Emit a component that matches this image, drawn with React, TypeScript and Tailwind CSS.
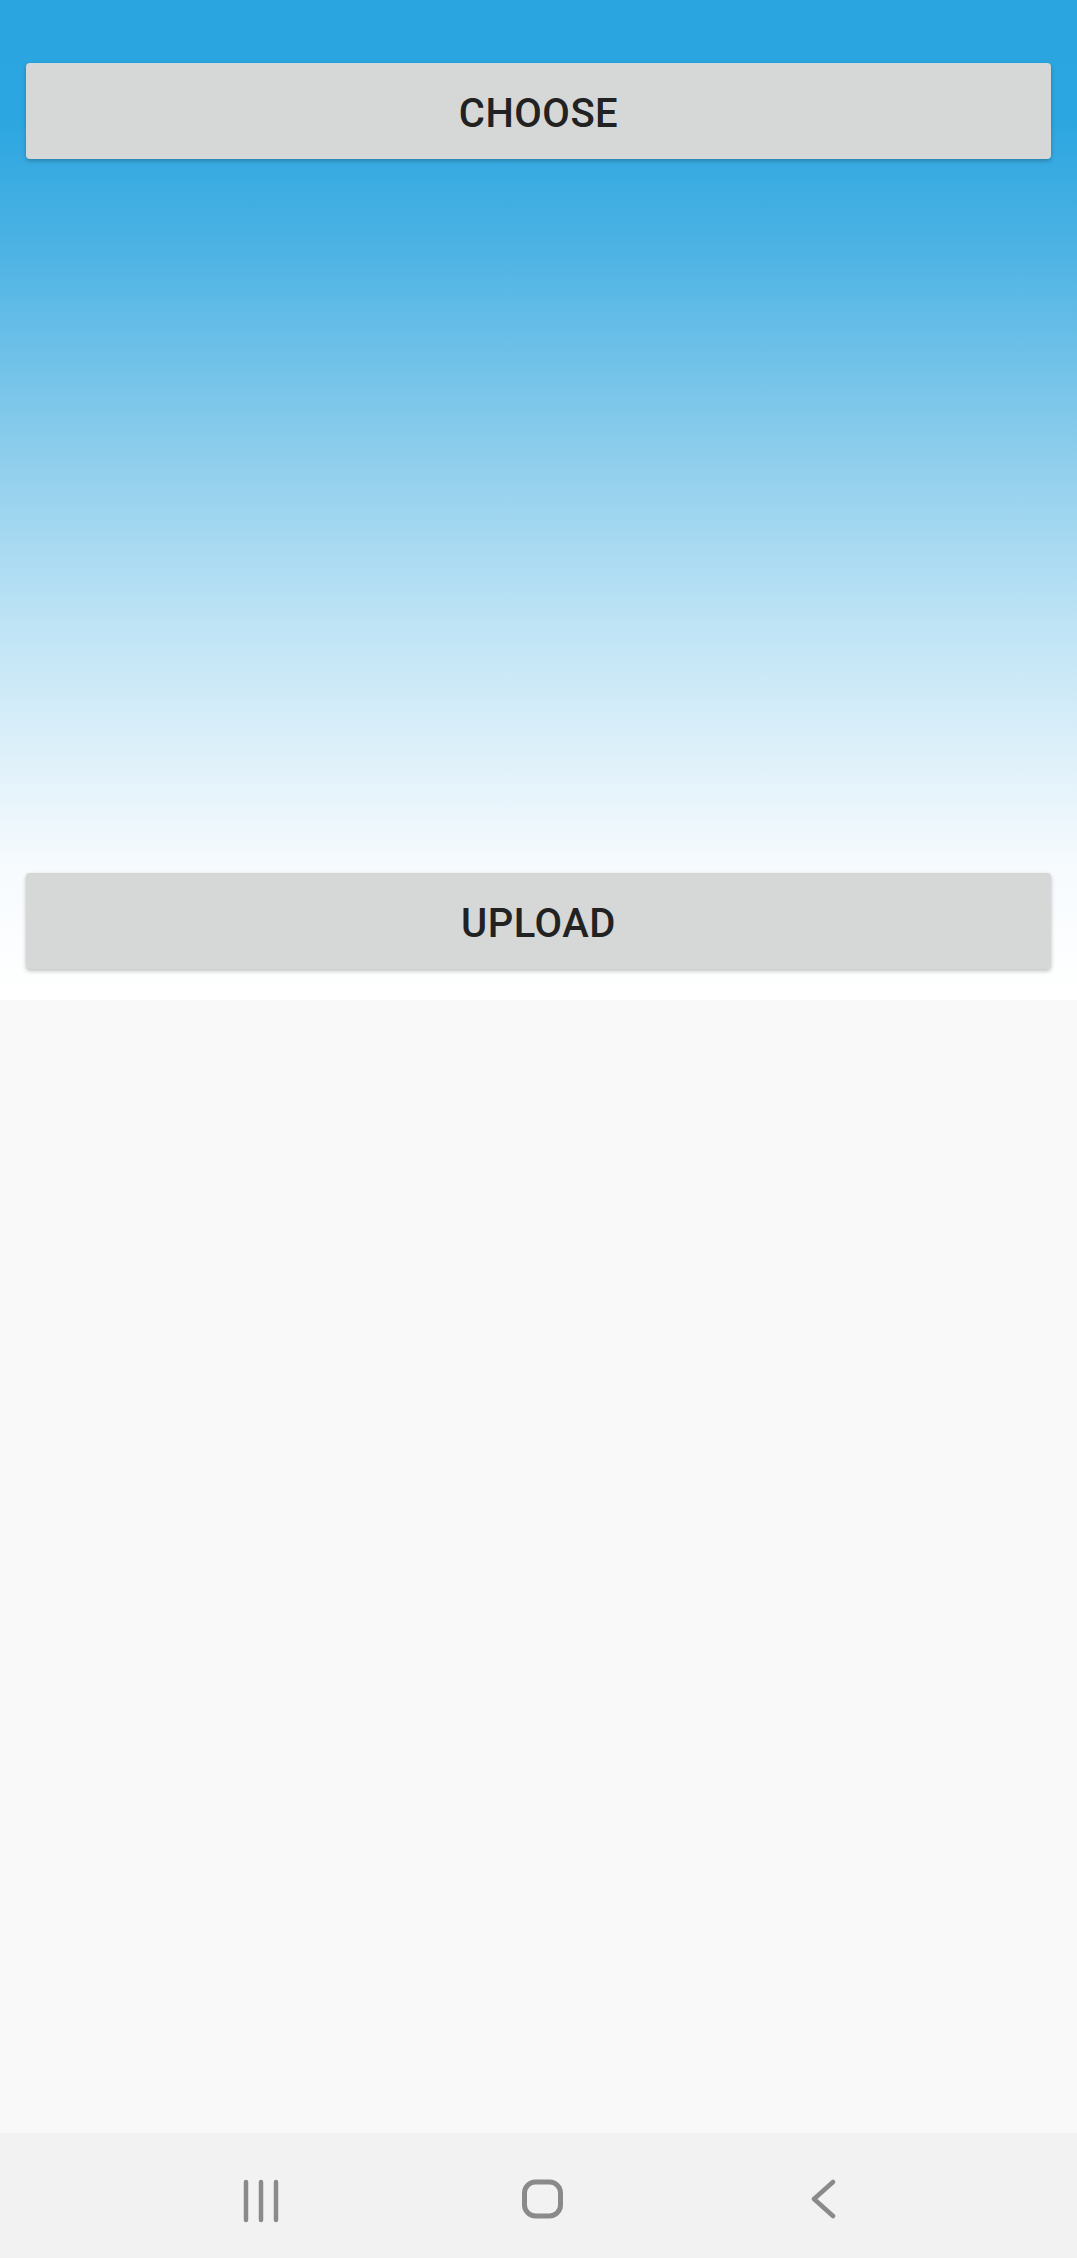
import React from 'react';

const ActionButton: React.FC<{ label: string }> = ({ label }) => (
  <button className="w-full h-[96px] bg-[#d6d8d7] rounded-[4px] shadow-[0_2px_4px_rgba(0,0,0,0.25)] flex items-center justify-center pt-[5px] text-[40px] font-medium tracking-[0.5px] text-[#222222] font-['Roboto',sans-serif]">
    {label}
  </button>
);

const NavBar: React.FC = () => (
  <div className="h-[125px] bg-[#f2f2f2] flex items-start justify-center pt-[46px]">
    <div className="w-[1077px] relative h-[45px]">
      {/* recents */}
      <svg className="absolute left-[242px] top-0" width="38" height="45" viewBox="0 0 38 45">
        <g stroke="#8a8a8a" strokeWidth="4.5" strokeLinecap="round">
          <line x1="4" y1="3" x2="4" y2="41" />
          <line x1="19" y1="3" x2="19" y2="41" />
          <line x1="34" y1="3" x2="34" y2="41" />
        </g>
      </svg>
      {/* home */}
      <svg className="absolute left-[520px] top-0" width="45" height="42" viewBox="0 0 45 42">
        <rect x="4.5" y="3" width="36" height="34" rx="11" fill="none" stroke="#8a8a8a" strokeWidth="5" />
      </svg>
      {/* back */}
      <svg className="absolute left-[808px] top-0" width="32" height="42" viewBox="0 0 32 42">
        <polyline points="25,3 6,20 25,37" fill="none" stroke="#8a8a8a" strokeWidth="4.5" strokeLinecap="round" strokeLinejoin="round" />
      </svg>
    </div>
  </div>
);

export default function App() {
  return (
    <div className="w-[1077px] h-[2258px] flex flex-col bg-[#f9f9f9] font-['Roboto',sans-serif]">
      <section className="h-[1000px] px-[26px] pt-[63px] pb-[31px] flex flex-col justify-between bg-[linear-gradient(to_bottom,#2aa5e0_0%,#2ca6e0_12%,#4db3e4_25%,#8ccdec_45%,#bde3f5_62%,#e4f3fb_78%,#f7fbfe_87%,#ffffff_100%)]">
        <ActionButton label="CHOOSE" />
        <ActionButton label="UPLOAD" />
      </section>
      <div className="flex-1" />
      <NavBar />
    </div>
  );
}
